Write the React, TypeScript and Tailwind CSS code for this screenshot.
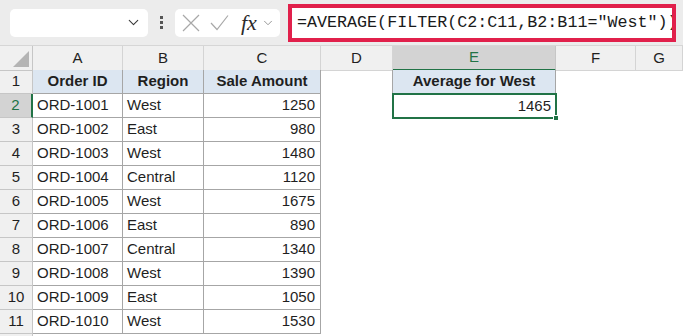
import React from 'react';
import { ChevronDown } from 'lucide-react';

const rows = [
  ['ORD-1001', 'West', '1250'],
  ['ORD-1002', 'East', '980'],
  ['ORD-1003', 'West', '1480'],
  ['ORD-1004', 'Central', '1120'],
  ['ORD-1005', 'West', '1675'],
  ['ORD-1006', 'East', '890'],
  ['ORD-1007', 'Central', '1340'],
  ['ORD-1008', 'West', '1390'],
  ['ORD-1009', 'East', '1050'],
  ['ORD-1010', 'West', '1530'],
];

const cols = ['A', 'B', 'C', 'D', 'E', 'F', 'G'];

const gridCols = 'grid grid-cols-[33px_90px_81px_117px_72px_163px_80px_1fr]';

const App: React.FC = () => {
  return (
    <div className="w-[683px] h-[336px] overflow-hidden bg-white text-[#1f1f1f]" style={{ fontFamily: '"Liberation Sans", Arial, sans-serif' }}>
      {/* Formula bar */}
      <div className="h-[46px] bg-[#ececec] border-b border-[#d6d6d6] flex items-center pl-[10px] pr-[7px]">
        <div className="w-[138px] h-[28px] bg-white rounded-[5px] flex items-center justify-end pr-[6px]">
          <ChevronDown className="w-[17px] h-[17px] text-[#3a3a3a]" strokeWidth={1.5} />
        </div>
        <div className="w-[27px] flex flex-col items-center gap-[2px]">
          <span className="w-[3px] h-[3px] bg-[#555]" />
          <span className="w-[3px] h-[3px] bg-[#555]" />
          <span className="w-[3px] h-[3px] bg-[#555]" />
        </div>
        <div className="w-[105px] h-[28px] bg-white rounded-[5px] flex items-center pl-[7px]">
          <svg width="18" height="18" viewBox="0 0 18 18" fill="none" stroke="#a8a8a8" strokeWidth="1.2">
            <path d="M1 1L17 17M17 1L1 17" />
          </svg>
          <svg width="19" height="17" viewBox="0 0 19 17" fill="none" stroke="#a8a8a8" strokeWidth="1.2" className="ml-[10px]">
            <path d="M1 9L7 15.5L18 1.5" />
          </svg>
          <span className="ml-[12px] text-[22px] italic text-[#2b2b2b] leading-none" style={{ fontFamily: '"Liberation Serif", serif' }}>fx</span>
          <ChevronDown className="w-[14px] h-[14px] text-[#8a8a8a] ml-[4px]" strokeWidth={1.5} />
        </div>
        <div className="ml-[8px] w-[388px] h-[38px] border-[4px] border-[#e1204b] bg-white flex items-center pl-[5px] overflow-hidden whitespace-nowrap">
          <span className="text-[16.7px] text-[#1a1a1a]" style={{ fontFamily: '"Liberation Mono", monospace' }}>
            =AVERAGE(FILTER(C2:C11,B2:B11="West"))
          </span>
        </div>
      </div>

      {/* Column headers */}
      <div className={`${gridCols} h-[24px] bg-[#f0f0f0] text-[15px]`}>
        <div className="relative border-r border-b border-[#c6c6c6]">
          <div className="absolute right-[3px] bottom-[3px] w-0 h-0 border-l-[16px] border-l-transparent border-b-[16px] border-b-[#b4b4b4]" />
        </div>
        {cols.map((c) =>
          c === 'E' ? (
            <div key={c} className="flex items-center justify-center bg-[#d3d3d3] text-[#217346] border-r border-[#c6c6c6] border-b-2 border-b-[#217346]">
              {c}
            </div>
          ) : (
            <div key={c} className="flex items-center justify-center border-r border-b border-[#d4d4d4]">
              {c}
            </div>
          )
        )}
      </div>

      {/* Row 1 */}
      <div className={`${gridCols} h-[24px] text-[15px]`}>
        <div className="flex items-center justify-center bg-[#f0f0f0] border-r border-b border-[#c6c6c6]">1</div>
        <div className="flex items-center justify-center font-bold bg-[#dce6f1] border-r border-b border-[#a6a6a6]">Order ID</div>
        <div className="flex items-center justify-center font-bold bg-[#dce6f1] border-r border-b border-[#a6a6a6]">Region</div>
        <div className="flex items-center justify-center font-bold bg-[#dce6f1] border-r border-b border-[#a6a6a6]">Sale Amount</div>
        <div className="border-r border-[#a6a6a6]" />
        <div className="flex items-center justify-center font-bold bg-[#dce6f1] border-r border-b border-[#a6a6a6]">Average for West</div>
        <div />
        <div />
      </div>

      {/* Data rows */}
      {rows.map((r, i) => {
        const n = i + 2;
        const active = n === 2;
        return (
          <div key={n} className={`${gridCols} h-[24px] text-[15px]`}>
            {active ? (
              <div className="flex items-center justify-center bg-[#d3d3d3] text-[#217346] border-r-2 border-r-[#217346] border-b border-b-[#c6c6c6]">{n}</div>
            ) : (
              <div className="flex items-center justify-center bg-[#f0f0f0] border-r border-b border-[#c6c6c6]">{n}</div>
            )}
            <div className="flex items-center pl-[4px] border-r border-b border-[#a6a6a6]">{r[0]}</div>
            <div className="flex items-center pl-[4px] border-r border-b border-[#a6a6a6]">{r[1]}</div>
            <div className="flex items-center justify-end pr-[5px] border-r border-b border-[#a6a6a6]">{r[2]}</div>
            <div />
            {active ? (
              <div className="relative flex items-center justify-end pr-[5px]">
                1465
                <div className="absolute -left-[1px] -top-[1px] -right-[1px] -bottom-[1px] border-2 border-[#217346]" />
                <div className="absolute -right-[3px] -bottom-[3px] w-[6px] h-[6px] bg-[#217346] border border-white" />
              </div>
            ) : (
              <div />
            )}
            <div />
            <div />
          </div>
        );
      })}

      <div className={`${gridCols} h-[24px]`}>
        <div className="bg-[#f0f0f0] border-r border-[#c6c6c6]" />
      </div>
    </div>
  );
};

export default App;
